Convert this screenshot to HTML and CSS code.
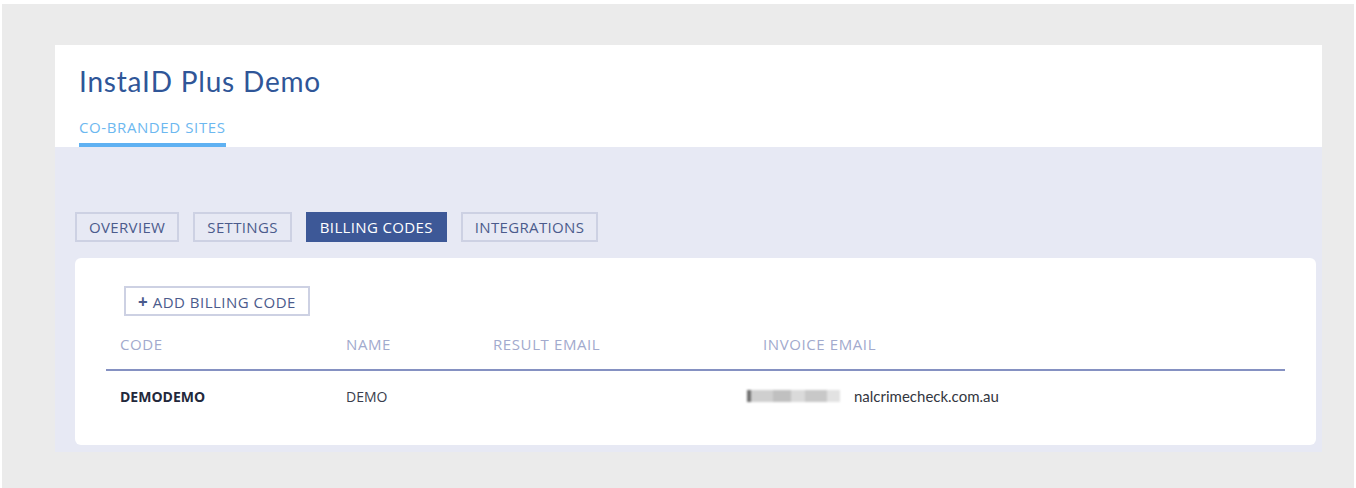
FILE: index.html
```html
<!DOCTYPE html>
<html lang="en">
<head>
<meta charset="utf-8">
<title>InstaID Plus Demo</title>
<link rel="stylesheet" href="styles.css">
</head>
<body>
<div class="frame">
  <div class="panel">
    <header class="panel-head">
      <h1 class="title">InstaID Plus Demo</h1>
      <nav class="subnav">
        <a class="subnav-item active">CO-BRANDED SITES</a>
      </nav>
    </header>
    <section class="panel-body">
      <div class="tabs">
        <button class="tab">OVERVIEW</button>
        <button class="tab">SETTINGS</button>
        <button class="tab tab-active">BILLING CODES</button>
        <button class="tab">INTEGRATIONS</button>
      </div>
      <div class="card">
        <button class="add-btn"><span class="plus">+</span> ADD BILLING CODE</button>
        <div class="table">
          <div class="row row-head">
            <div class="cell c-code">CODE</div>
            <div class="cell c-name">NAME</div>
            <div class="cell c-result">RESULT EMAIL</div>
            <div class="cell c-invoice">INVOICE EMAIL</div>
          </div>
          <div class="row row-data">
            <div class="cell c-code strong">DEMODEMO</div>
            <div class="cell c-name">DEMO</div>
            <div class="cell c-result"></div>
            <div class="cell c-invoice"><span class="blur"><i class="b1"></i><i class="b2"></i><i class="b3"></i><i class="b4"></i><i class="b5"></i><i class="b6"></i></span><span class="email">nalcrimecheck.com.au</span></div>
          </div>
        </div>
      </div>
    </section>
  </div>
</div>
</body>
</html>
```
FILE: styles.css
```css
html, body {
  margin: 0;
  padding: 0;
  background: #ffffff;
}
body {
  font-family: "Open Sans", "Lato", sans-serif;
  width: 1356px;
  height: 488px;
  overflow: hidden;
}
.frame {
  margin: 4px 2px 0 2px;
  height: 484px;
  background: #ebebeb;
  padding-top: 41px;
  padding-left: 53px;
  box-sizing: border-box;
}
.panel {
  width: 1267px;
}
.panel-head {
  background: #ffffff;
  height: 102px;
  box-sizing: border-box;
  padding: 19px 24px 0 24px;
  display: flex;
  flex-direction: column;
}
.title {
  margin: 0;
  font-family: "Lato", sans-serif;
  font-weight: 400;
  font-size: 28px;
  line-height: 34px;
  color: #2f5698;
  letter-spacing: 0.8px;
}
.subnav {
  margin-top: 19px;
  display: flex;
}
.subnav-item {
  font-size: 15px;
  line-height: 20px;
  color: #6cb8f0;
  padding-bottom: 6px;
  border-bottom: 4px solid #5fb1f2;
  letter-spacing: 0.6px;
}
.panel-body {
  background: #e7e9f4;
  padding: 65px 6px 7px 20px;
}
.tabs {
  display: flex;
  gap: 14px;
  margin-bottom: 16px;
}
.tab {
  font-family: "Open Sans", sans-serif;
  font-size: 15px;
  color: #4b5b8c;
  background: #e7e9f4;
  border: 2px solid #cdd1e3;
  height: 30px;
  padding: 0 12px;
  margin: 0;
  letter-spacing: 0.35px;
}
.tab-active {
  background: #3d5897;
  border-color: #3d5897;
  color: #ffffff;
}
.card {
  background: #ffffff;
  border-radius: 6px;
  height: 187px;
  box-sizing: border-box;
  padding: 28px 31px 0 31px;
}
.add-btn {
  margin-left: 18px;
  font-family: "Open Sans", sans-serif;
  font-size: 15px;
  color: #4b5b8c;
  background: #ffffff;
  border: 2px solid #cdd1e3;
  height: 30px;
  width: 186px;
  padding: 0;
  letter-spacing: 0.5px;
}
.plus {
  font-weight: 700;
  font-size: 17px;
}
.table {
  margin-top: 13px;
}
.row {
  display: flex;
  align-items: center;
}
.row-head {
  height: 40px;
  border-bottom: 2px solid #8591c2;
  align-items: flex-start;
}
.row-head .cell {
  color: #a2aacd;
  font-size: 15px;
  line-height: 20px;
  padding-top: 5px;
  letter-spacing: 0.6px;
}
.row-data {
  height: 50px;
}
.cell {
  padding: 0 14px;
  box-sizing: border-box;
  font-size: 14px;
  color: #3a3d4d;
  white-space: nowrap;
}
.c-code { width: 226px; }
.c-name { width: 147px; }
.c-result { width: 270px; }
.c-invoice { flex: 1; display: flex; align-items: center; }
.strong {
  font-weight: 700;
  color: #23283b;
}
.blur {
  display: inline-flex;
  align-items: center;
  margin-left: -16px;
  margin-right: 14px;
  height: 14px;
  filter: blur(0.8px);
}
.blur i {
  display: inline-block;
  height: 12px;
}
.blur .b1 { width: 4px; background: #6f6f6f; }
.blur .b2 { width: 22px; background: #cfcfcf; }
.blur .b3 { width: 18px; background: #c0c0c0; }
.blur .b4 { width: 14px; background: #dadada; }
.blur .b5 { width: 22px; background: #c8c8c8; }
.blur .b6 { width: 13px; background: #e2e2e2; }
.email {
  font-family: "Lato", sans-serif;
  font-size: 15px;
  color: #333640;
}
```
